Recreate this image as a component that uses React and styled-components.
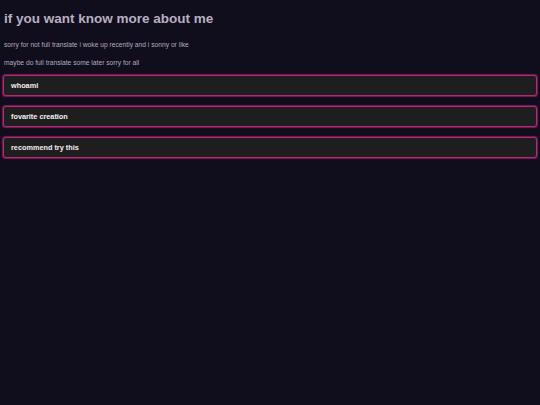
import React from 'react';
import styled, { createGlobalStyle } from 'styled-components';

const Global = createGlobalStyle`
  html, body {
    margin: 0;
    background: #100d1c;
  }
  body {
    font-family: "Liberation Sans", Arial, sans-serif;
  }
`;

const items = ['whoami', 'fovarite creation', 'recommend try this'];

const App = () => {
  return (
    <Page>
      <Global />
      <Title>if you want know more about me</Title>
      <Note>sorry for not full translate i woke up recently and i sonny or like</Note>
      <Note>maybe do full translate some later sorry for all</Note>
      <List>
        {items.map((item) => (
          <Item key={item}>{item}</Item>
        ))}
      </List>
    </Page>
  );
};

const Page = styled.main`
  padding: 10px 3px;
  min-height: 405px;
  box-sizing: border-box;
`;

const Title = styled.h1`
  margin: 0 0 0 1px;
  font-size: 13.5px;
  font-weight: 700;
  color: #b8b0c2;
  line-height: 18px;
`;

const Note = styled.p`
  margin: 12px 0 0 1px;
  font-size: 6.7px;
  line-height: 6px;
  color: #b4acbe;

  &:first-of-type {
    margin-top: 14px;
  }
`;

const List = styled.div`
  display: flex;
  flex-direction: column;
  gap: 10px;
  margin-top: 9px;
`;

const Item = styled.div`
  height: 21px;
  box-sizing: border-box;
  display: flex;
  align-items: center;
  padding: 0 7px;
  background: #1e1e1e;
  border: 1px solid #b02a78;
  box-shadow: 0 0 1px 0.5px #7a1c56;
  border-radius: 3px;
  color: #f2f2f2;
  font-size: 7.3px;
  font-weight: 700;
`;

export default App;
